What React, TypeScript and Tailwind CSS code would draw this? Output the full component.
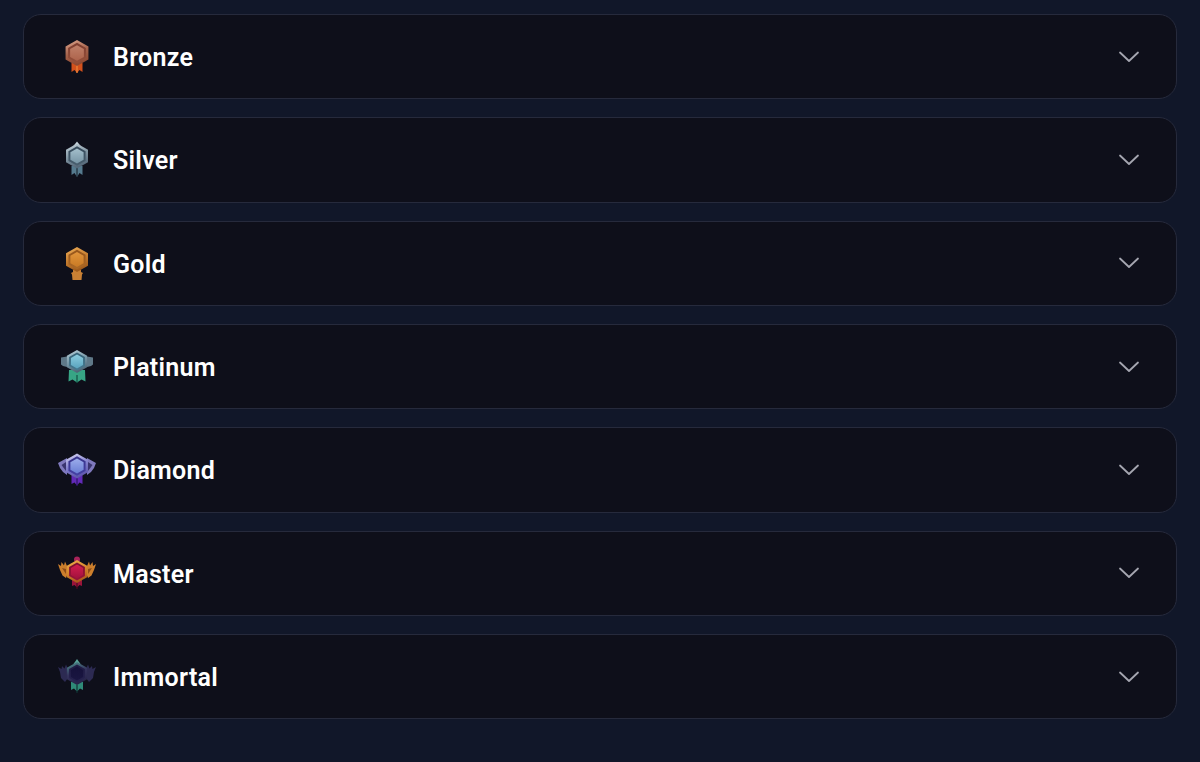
import React from "react";

type Look = {
  id: string;
  cy: number;
  r: number;
  rim: [string, string, string];
  ring: [string, string];
  core: [string, string];
  ribbon: string;
  ribbonDark: string;
  ribbonPath: string;
  extra?: React.ReactNode;
  top?: React.ReactNode;
};

function hex(cy: number, r: number) {
  const w = r * 0.88;
  const h = r * 0.5;
  return `M20 ${cy - r}L${20 + w} ${cy - h}L${20 + w} ${cy + h}L20 ${cy + r}L${20 - w} ${cy + h}L${20 - w} ${cy - h}Z`;
}

function Medal({ look }: { look: Look }) {
  const { id, cy, r } = look;
  return (
    <svg width="40" height="40" viewBox="0 0 40 40" className="shrink-0 blur-[0.35px]">
      <defs>
        <linearGradient id={`${id}-rim`} x1="0" y1="0" x2="0.3" y2="1">
          <stop offset="0" stopColor={look.rim[0]} />
          <stop offset="0.55" stopColor={look.rim[1]} />
          <stop offset="1" stopColor={look.rim[2]} />
        </linearGradient>
        <linearGradient id={`${id}-ring`} x1="0" y1="0" x2="0" y2="1">
          <stop offset="0" stopColor={look.ring[0]} />
          <stop offset="1" stopColor={look.ring[1]} />
        </linearGradient>
        <linearGradient id={`${id}-core`} x1="0" y1="0" x2="0" y2="1">
          <stop offset="0" stopColor={look.core[0]} />
          <stop offset="1" stopColor={look.core[1]} />
        </linearGradient>
      </defs>
      {look.extra}
      <path d={look.ribbonPath} fill={look.ribbon} />
      <path d="M20 28v8" stroke={look.ribbonDark} strokeWidth="1.2" />
      {look.top}
      <path d={hex(cy, r)} fill={`url(#${id}-rim)`} />
      <path d={hex(cy, r * 0.78)} fill={`url(#${id}-ring)`} />
      <path d={hex(cy, r * 0.6)} fill={`url(#${id}-core)`} />
    </svg>
  );
}

const ribbonV = "M14.500 26L14.500 35L17.500 33L20 36L22.500 33L25.500 35L25.500 26Z";

const tiers: { name: string; look: Look }[] = [
  {
    name: "Bronze",
    look: {
      id: "bronze", cy: 16, r: 13,
      rim: ["#e0a78f", "#a4624b", "#8f4a33"],
      ring: ["#7e3d2f", "#96503b"],
      core: ["#c08069", "#ad634b"],
      ribbon: "#d2511c", ribbonDark: "#f08a3c", ribbonPath: ribbonV,
    },
  },
  {
    name: "Silver",
    look: {
      id: "silver", cy: 16, r: 12.500,
      rim: ["#c9d6de", "#8296a3", "#56697a"],
      ring: ["#34495a", "#4a6070"],
      core: ["#a4bfcc", "#7795a5"],
      ribbon: "#557a8e", ribbonDark: "#1e2c38", ribbonPath: "M14.500 26L14.500 35L17.500 33L20 37L22.500 33L25.500 35L25.500 26Z",
      top: <path d="M20 1.500L24 6.500L16 6.500Z" fill="#c9d6de" />,
    },
  },
  {
    name: "Gold",
    look: {
      id: "gold", cy: 16.500, r: 12.500,
      rim: ["#eeae58", "#c67e30", "#9f5b1c"],
      ring: ["#95541a", "#ad6a26"],
      core: ["#e2953b", "#c87a24"],
      ribbon: "#c98034", ribbonDark: "#c98034", ribbonPath: "M16 27L16 29L14 30L15 31.500L15.500 37L24.500 37L25 31.500L26 30L24 29L24 27Z",
    },
  },
  {
    name: "Platinum",
    look: {
      id: "platinum", cy: 14.500, r: 11.500,
      rim: ["#bcd4dd", "#7696a6", "#4f6878"],
      ring: ["#356277", "#467a90"],
      core: ["#8ccde0", "#5aa4be"],
      ribbon: "#37a585", ribbonDark: "#134f42", ribbonPath: "M12 23L11.500 34.500L15.500 32.500L20 35.500L24.500 32.500L28.500 34.500L28 23Z",
      extra: <path d="M4 10.500L10 9.500L10 20L6 19L4 17.500ZM36 10.500L30 9.500L30 20L34 19L36 17.500Z" fill="#5f7888" />,
    },
  },
  {
    name: "Diamond",
    look: {
      id: "diamond", cy: 16, r: 12.500,
      rim: ["#dcdaf6", "#8583cf", "#6058ae"],
      ring: ["#363289", "#4642a6"],
      core: ["#9cadec", "#6a7ed4"],
      ribbon: "#622ab8", ribbonDark: "#2d1466", ribbonPath: "M14.500 25L14.500 34L17.500 32.500L20 35.500L22.500 32.500L25.500 34L25.500 25Z",
      extra: (
        <g>
          <path d="M1 13L10 8L10 25L6 22L3 18ZM39 13L30 8L30 25L34 22L37 18Z" fill="#7f79bd" />
          <path d="M4.500 15L9 12L9 21ZM35.500 15L31 12L31 21Z" fill="#3a3570" />
        </g>
      ),
    },
  },
  {
    name: "Master",
    look: {
      id: "master", cy: 18.500, r: 11.500,
      rim: ["#f2b04e", "#d6872c", "#ad5a1b"],
      ring: ["#7c0f30", "#991339"],
      core: ["#d31d4f", "#a3113d"],
      ribbon: "#9a143a", ribbonDark: "#4c0a20", ribbonPath: "M15 26L15 33L17.500 32L20 34.500L22.500 32L25 33L25 26Z",
      extra: (
        <g>
          <path d="M1 11L4 13L4.500 9L7 12.500L8 8.500L10 13L11 20L9 25L5.500 22.500L3 17ZM39 11L36 13L35.500 9L33 12.500L32 8.500L30 13L29 20L31 25L34.500 22.500L37 17Z" fill="#cc7f2c" />
          <path d="M5 15L9 16L9 21ZM35 15L31 16L31 21Z" fill="#8f4c18" />
        </g>
      ),
      top: <circle cx="20" cy="6.500" r="3" fill="#a8235a" />,
    },
  },
  {
    name: "Immortal",
    look: {
      id: "immortal", cy: 16.500, r: 11.500,
      rim: ["#4f958e", "#34325c", "#27244a"],
      ring: ["#1f1b44", "#26224f"],
      core: ["#15113a", "#1a1642"],
      ribbon: "#2f8a78", ribbonDark: "#0f3333", ribbonPath: "M14 25L14 33L17 31.500L20 34.500L23 31.500L26 33L26 25Z",
      extra: <path d="M1 10L4.500 12L5 9L7.500 11.500L9 7.500L11 12L11 21L8 25L4 21L3 15ZM39 10L35.500 12L35 9L32.500 11.500L31 7.500L29 12L29 21L32 25L36 21L37 15Z" fill="#2c2a52" />,
      top: <path d="M20 2L23.500 7L16.500 7Z" fill="#5aa39b" />,
    },
  },
];

export default function App() {
  return (
    <div className="min-h-[762px] bg-[#111729] px-[23px] pt-[14px] flex flex-col gap-[18px]">
      {tiers.map((t) => (
        <div
          key={t.name}
          className="h-[85.33px] flex items-center pl-[33px] pr-[36px] rounded-[18px] border border-[#262a3c] bg-[#0e0f1a]"
        >
          <Medal look={t.look} />
          <span className="ml-[16px] mt-[2px] flex-1 text-[25px] leading-none font-semibold tracking-[0.3px] text-white [font-family:'Roboto',sans-serif]">
            {t.name}
          </span>
          <svg width="22" height="12" viewBox="0 0 22 12" fill="none">
            <path d="M2 1.500L11 10L20 1.500" stroke="#a5a6b0" strokeWidth="1.800" strokeLinecap="round" strokeLinejoin="round" />
          </svg>
        </div>
      ))}
    </div>
  );
}
